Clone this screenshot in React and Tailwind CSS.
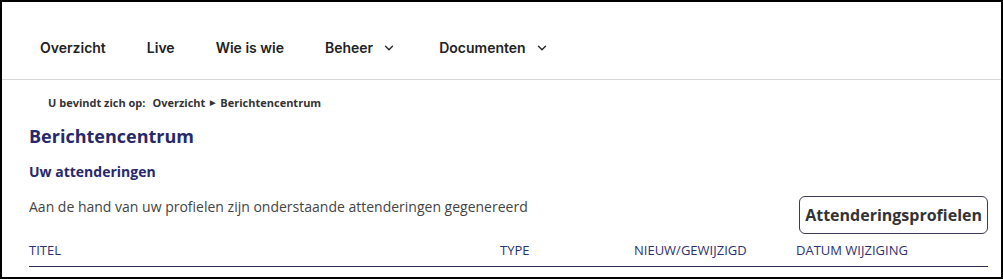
import { ChevronDown } from "lucide-react";

function NavItem({ label, dropdown }) {
    return (
        <div className="flex items-center">
            <span>{label}</span>
            {dropdown && <ChevronDown className="ml-[9px] h-[14px] w-[14px]" strokeWidth={2.25} />}
        </div>
    );
}

export default function App() {
    return (
        <div className="h-[279px] w-[1003px] overflow-hidden border-2 border-black bg-white" style={{ fontFamily: "'Open Sans', sans-serif" }}>
            <nav
                className="flex h-[78px] items-center gap-[41px] border-b border-[#d6d6d6] pl-[38px] pt-[14px] text-[14px] font-semibold text-[#222]"
                style={{ fontFamily: "Inter, sans-serif" }}
            >
                <NavItem label="Overzicht" />
                <NavItem label="Live" />
                <NavItem label="Wie is wie" />
                <NavItem label="Beheer" dropdown />
                <div className="ml-[2px]">
                    <NavItem label="Documenten" dropdown />
                </div>
            </nav>

            <div className="pl-[27px] pr-[13px]">
                <div className="mt-[13px] flex items-center pl-[19px] text-[11px] font-bold leading-[20px] text-[#333]">
                    <span>U bevindt zich op:</span>
                    <span className="ml-[7px]">Overzicht</span>
                    <span className="mx-[5px] text-[7px]">▶</span>
                    <span>Berichtencentrum</span>
                </div>

                <h1 className="mt-[10px] text-[18px] font-bold leading-[26px] text-[#27296b]">Berichtencentrum</h1>
                <h2 className="mt-[13px] text-[14px] font-bold leading-[20px] text-[#27296b]">Uw attenderingen</h2>

                <div className="mt-[14px] flex items-start justify-between">
                    <p className="mt-[1px] text-[14px] leading-[20px] text-[#444]">
                        Aan de hand van uw profielen zijn onderstaande attenderingen gegenereerd
                    </p>
                    <button className="h-[38px] rounded-[6px] border border-[#3b3b55] px-[5px] text-[16px] font-bold text-[#333]">
                        Attenderingsprofielen
                    </button>
                </div>

                <div className="mt-[7px] grid grid-cols-[471px_134px_162px_1fr] border-b border-[#2c2c55] pb-[7px] text-[13px] leading-[18px] text-[#2d3172]">
                    <span>TITEL</span>
                    <span>TYPE</span>
                    <span>NIEUW/GEWIJZIGD</span>
                    <span>DATUM WIJZIGING</span>
                </div>
            </div>
        </div>
    );
}
